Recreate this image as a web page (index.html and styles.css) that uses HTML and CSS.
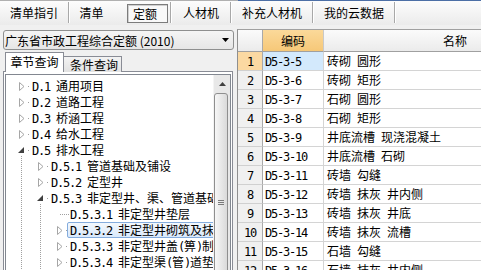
FILE: index.html
```html
<!DOCTYPE html>
<html lang="zh-CN">
<head>
    <meta charset="UTF-8">
    <title>定额</title>
    <link rel="stylesheet" href="styles.css">
</head>
<body>
    <div class="topbar">
        <div class="tab t1">清单指引</div>
        <div class="tab t2">清单</div>
        <div class="tab t3"><span class="cur">定额</span></div>
        <div class="tab t4">人材机</div>
        <div class="tab t5">补充人材机</div>
        <div class="tab t6">我的云数据</div>
    </div>

    <div class="main">
        <div class="left">
            <div class="combo">
                <span>广东省市政工程综合定额 (2010)</span>
                <svg width="7" height="4" viewBox="0 0 7 4"><path d="M0 0H7L3.5 4Z" fill="#000"/></svg>
            </div>
            <div class="subtabs">
                <div class="stab on">章节查询</div>
                <div class="stab">条件查询</div>
            </div>
            <div class="page">
                <div class="treebox">
                    <div class="rows">
                        <div class="node"><span class="cell shut"><svg width="6" height="9"><path d="M0.5 0.5L5 4.5L0.5 8.5Z" fill="#fff" stroke="#a6a6a6"/></svg></span><span class="label"><span class="a">D.1</span>&ensp;通用项目</span></div>
                        <div class="node"><span class="cell shut"><svg width="6" height="9"><path d="M0.5 0.5L5 4.5L0.5 8.5Z" fill="#fff" stroke="#a6a6a6"/></svg></span><span class="label"><span class="a">D.2</span>&ensp;道路工程</span></div>
                        <div class="node"><span class="cell shut"><svg width="6" height="9"><path d="M0.5 0.5L5 4.5L0.5 8.5Z" fill="#fff" stroke="#a6a6a6"/></svg></span><span class="label"><span class="a">D.3</span>&ensp;桥涵工程</span></div>
                        <div class="node"><span class="cell shut"><svg width="6" height="9"><path d="M0.5 0.5L5 4.5L0.5 8.5Z" fill="#fff" stroke="#a6a6a6"/></svg></span><span class="label"><span class="a">D.4</span>&ensp;给水工程</span></div>
                        <div class="node"><span class="cell open"><svg width="6" height="6"><path d="M6 0V6H0Z" fill="#404040"/></svg></span><span class="label"><span class="a">D.5</span>&ensp;排水工程</span></div>
                        <div class="node"><span class="cell guide"></span><span class="cell shut"><svg width="6" height="9"><path d="M0.5 0.5L5 4.5L0.5 8.5Z" fill="#fff" stroke="#a6a6a6"/></svg></span><span class="label"><span class="a">D.5.1</span>&ensp;管道基础及铺设</span></div>
                        <div class="node"><span class="cell guide"></span><span class="cell shut"><svg width="6" height="9"><path d="M0.5 0.5L5 4.5L0.5 8.5Z" fill="#fff" stroke="#a6a6a6"/></svg></span><span class="label"><span class="a">D.5.2</span>&ensp;定型井</span></div>
                        <div class="node"><span class="cell guide"></span><span class="cell open"><svg width="6" height="6"><path d="M6 0V6H0Z" fill="#404040"/></svg></span><span class="label"><span class="a">D.5.3</span>&ensp;非定型井、渠、管道基础及砌筑</span></div>
                        <div class="node"><span class="cell guide"></span><span class="cell guide"></span><span class="cell leaf"></span><span class="label"><span class="a">D.5.3.1</span>&ensp;非定型井垫层</span></div>
                        <div class="node"><span class="cell guide"></span><span class="cell guide"></span><span class="cell shut"><svg width="6" height="9"><path d="M0.5 0.5L5 4.5L0.5 8.5Z" fill="#fff" stroke="#a6a6a6"/></svg></span><span class="label sel"><span class="a">D.5.3.2</span>&ensp;非定型井砌筑及抹灰</span></div>
                        <div class="node"><span class="cell guide"></span><span class="cell guide"></span><span class="cell shut"><svg width="6" height="9"><path d="M0.5 0.5L5 4.5L0.5 8.5Z" fill="#fff" stroke="#a6a6a6"/></svg></span><span class="label"><span class="a">D.5.3.3</span>&ensp;非定型井盖<span class="a">(</span>箅<span class="a">)</span>制作、安装</span></div>
                        <div class="node"><span class="cell guide"></span><span class="cell guide"></span><span class="cell shut"><svg width="6" height="9"><path d="M0.5 0.5L5 4.5L0.5 8.5Z" fill="#fff" stroke="#a6a6a6"/></svg></span><span class="label"><span class="a">D.5.3.4</span>&ensp;非定型渠<span class="a">(</span>管<span class="a">)</span>道垫层</span></div>
                    </div>
                    <div class="sbar">
                        <div class="sbar-up">
                            <svg width="7" height="4" viewBox="0 0 7 4"><path d="M0 4H7L3.5 0Z" fill="#404040"/></svg>
                        </div>
                        <div class="sbar-thumb">
                            <svg width="6" height="5" viewBox="0 0 6 5"><path d="M0 0.5H6M0 2.5H6M0 4.5H6" stroke="#7a7a7a"/></svg>
                        </div>
                    </div>
                </div>
            </div>
        </div>

        <div class="grid">
            <div class="row head">
                <div class="c num"></div>
                <div class="c code hl">编码</div>
                <div class="c name">名称</div>
            </div>
            <div class="row">
                <div class="c num hl"><span class="a">1</span></div>
                <div class="c code cur-cell"><span class="a">D5-3-5</span></div>
                <div class="c name">砖砌&ensp;圆形</div>
            </div>
            <div class="row">
                <div class="c num"><span class="a">2</span></div>
                <div class="c code"><span class="a">D5-3-6</span></div>
                <div class="c name">砖砌&ensp;矩形</div>
            </div>
            <div class="row">
                <div class="c num"><span class="a">3</span></div>
                <div class="c code"><span class="a">D5-3-7</span></div>
                <div class="c name">石砌&ensp;圆形</div>
            </div>
            <div class="row">
                <div class="c num"><span class="a">4</span></div>
                <div class="c code"><span class="a">D5-3-8</span></div>
                <div class="c name">石砌&ensp;矩形</div>
            </div>
            <div class="row">
                <div class="c num"><span class="a">5</span></div>
                <div class="c code"><span class="a">D5-3-9</span></div>
                <div class="c name">井底流槽&ensp;现浇混凝土</div>
            </div>
            <div class="row">
                <div class="c num"><span class="a">6</span></div>
                <div class="c code"><span class="a">D5-3-10</span></div>
                <div class="c name">井底流槽&ensp;石砌</div>
            </div>
            <div class="row">
                <div class="c num"><span class="a">7</span></div>
                <div class="c code"><span class="a">D5-3-11</span></div>
                <div class="c name">砖墙&ensp;勾缝</div>
            </div>
            <div class="row">
                <div class="c num"><span class="a">8</span></div>
                <div class="c code"><span class="a">D5-3-12</span></div>
                <div class="c name">砖墙&ensp;抹灰&ensp;井内侧</div>
            </div>
            <div class="row">
                <div class="c num"><span class="a">9</span></div>
                <div class="c code"><span class="a">D5-3-13</span></div>
                <div class="c name">砖墙&ensp;抹灰&ensp;井底</div>
            </div>
            <div class="row">
                <div class="c num"><span class="a">10</span></div>
                <div class="c code"><span class="a">D5-3-14</span></div>
                <div class="c name">砖墙&ensp;抹灰&ensp;流槽</div>
            </div>
            <div class="row">
                <div class="c num"><span class="a">11</span></div>
                <div class="c code"><span class="a">D5-3-15</span></div>
                <div class="c name">石墙&ensp;勾缝</div>
            </div>
            <div class="row">
                <div class="c num"><span class="a">12</span></div>
                <div class="c code"><span class="a">D5-3-16</span></div>
                <div class="c name">石墙&ensp;抹灰&ensp;井内侧</div>
            </div>
        </div>
    </div>
</body>
</html>
```

FILE: styles.css
```css
body {
    margin: 0;
    width: 481px;
    height: 270px;
    overflow: hidden;
    background: #f0f0f0;
    font-family: "Noto Sans CJK SC", sans-serif;
    font-size: 12px;
    color: #000;
}

/* latin and digits, half width like the bitmap font of the original */
.a {
    font-family: "DejaVu Sans Mono", monospace;
    font-size: 12px;
    line-height: 1;
    letter-spacing: -1.22px;
}

/* top tabs */
.topbar {
    display: flex;
    height: 25px;
    background:
        linear-gradient(#4c6fa6, #4c6fa6) 238px 0 / 100% 1px no-repeat,
        linear-gradient(#b0b0b0, #b0b0b0) 0 0 / 238px 1px no-repeat,
        linear-gradient(#fdfdfd, #ebebeb);
}

.tab {
    flex: none;
    height: 21px;
    margin-top: 2px;
    margin-right: 1px;
    line-height: 21px;
    text-align: center;
    border-right: 1px solid #a8a8a8;
    box-shadow: 1px 0 0 #fff;
}

.t1 { width: 68px; }
.t2 { width: 43px; border-right: none; box-shadow: none; margin-right: 0; }
.t3 { width: 57px; text-align: left; }
.t4 { width: 58px; }
.t5 { width: 80px; }
.t6 { width: 80px; }

.cur {
    display: block;
    box-sizing: border-box;
    width: 41px;
    height: 19px;
    margin: 2px 0 0 14px;
    padding-left: 5px;
    line-height: 17px;
    border: 1px solid #7c7c7c;
    box-shadow: inset 1px 1px 0 #d0d0d0;
    background: #f9f9f9;
}

.main {
    display: flex;
    height: 245px;
}

/* left panel */
.left {
    flex: none;
    width: 234px;
    padding-top: 5px;
}

.combo {
    box-sizing: border-box;
    width: 231px;
    height: 20px;
    margin-left: 3px;
    padding: 0 4px 0 1px;
    display: flex;
    align-items: center;
    justify-content: space-between;
    border: 1px solid #8e8f8f;
    border-radius: 3px;
    background: linear-gradient(#f5f5f5, #e6e6e6);
}

.subtabs {
    display: flex;
    align-items: flex-end;
    height: 19px;
    margin: 3px 0 -1px 5px;
}

.stab {
    box-sizing: border-box;
    width: 58px;
    height: 16px;
    line-height: 16px;
    text-align: center;
    border: 1px solid #898c95;
    border-bottom: none;
    background: linear-gradient(#f3f3f3, #e2e2e2);
}

.stab.on {
    width: 59px;
    height: 20px;
    line-height: 18px;
    background: #fff;
    position: relative;
    z-index: 1;
}

.stab + .stab {
    border-left: none;
    padding-left: 3px;
}

.page {
    width: 230px;
    height: 200px;
    box-sizing: border-box;
    margin-left: 3px;
    padding: 2px 1px 0 1px;
    border: 1px solid #898c95;
    border-bottom: none;
    background: #fff;
}

.treebox {
    display: flex;
    flex-direction: row;
    flex-wrap: nowrap;
    width: 226px;
    height: 197px;
    box-sizing: border-box;
    border: 1px solid #828790;
    border-bottom: none;
    background: #fff;
    overflow: hidden;
}

.rows {
    flex: 0 0 207px;
    width: 207px;
    height: 197px;
    box-sizing: border-box;
    overflow: hidden;
    padding: 3px 0 0 6px;
    white-space: nowrap;
}

.node {
    display: flex;
    height: 16px;
    line-height: 16px;
}

.cell {
    flex: none;
    width: 19px;
    height: 16px;
}

.cell svg {
    display: block;
}

/* dotted tree lines are backgrounds of the cells */
.guide {
    background: repeating-linear-gradient(#a0a0a0 0 1px, transparent 1px 2px) 9px 0 / 1px 16px no-repeat;
}

.shut {
    background: linear-gradient(#a0a0a0, #a0a0a0) 16px 8px / 1px 1px no-repeat;
}

.shut svg {
    margin: 4px 0 0 7px;
}

.open {
    background:
        linear-gradient(#a0a0a0, #a0a0a0) 16px 8px / 1px 1px no-repeat,
        repeating-linear-gradient(#a0a0a0 0 1px, transparent 1px 2px) 9px 14px / 1px 2px no-repeat;
}

.open svg {
    margin: 5px 0 0 6px;
}

.leaf {
    background: repeating-linear-gradient(to right, #a0a0a0 0 1px, transparent 1px 2px) 10px 8px / 9px 1px no-repeat;
}

.label {
    flex: none;
    margin-left: -2px;
    padding: 0 2px;
    border: 1px solid transparent;
    line-height: 14px;
}

.label.sel {
    border-color: #84acdd;
    border-radius: 2px;
    background: linear-gradient(#f3f8fd, #d9e9fb);
}

/* tree scrollbar */
.sbar {
    flex: 0 0 17px;
    width: 17px;
    height: 197px;
    box-sizing: border-box;
    background-color: #e8e8e8;
    border-left: 1px solid #f4f4f4;
}

.sbar-up {
    height: 18px;
    display: flex;
    align-items: center;
    justify-content: center;
}

.sbar-thumb {
    width: 14px;
    height: 218px;
    box-sizing: border-box;
    border: 1px solid #8f8f8f;
    border-radius: 3px;
    background-color: #ececec;
    background-image: linear-gradient(to right, #f7f7f7, #dadada);
    display: flex;
    align-items: center;
    justify-content: center;
}

/* right grid */
.grid {
    flex: 1;
    min-width: 0;
    margin: 4px 0 0 3px;
    border-top: 1px solid #a0a0a0;
    border-left: 1px solid #8f8f8f;
    background: #fff;
    overflow: hidden;
}

.row {
    display: grid;
    grid-template-columns: 25px 61px 263px;
    height: 19px;
}

.c {
    box-sizing: border-box;
    border-right: 1px solid #d4d4d4;
    border-bottom: 1px solid #d4d4d4;
    line-height: 18px;
    white-space: nowrap;
    overflow: hidden;
}

.num {
    text-align: center;
    background: #f0f0f0;
    border-right-color: #a9a9a9;
    border-bottom-color: #d0d0d0;
}

.num.hl {
    background: #fbd9a2;
}

.code {
    padding-left: 2px;
}

.code.cur-cell {
    background: #d3e9fc;
}

.name {
    padding-left: 3px;
}

.row.head {
    height: 22px;
}

.head .c {
    text-align: center;
    line-height: 21px;
    padding: 0;
    border-bottom-color: #a0a0a0;
    background: linear-gradient(#fbfbfb, #ebebeb);
}

.head .code.hl {
    background: linear-gradient(#fbd99a, #f6c878);
    border-right-color: #c9c9c9;
}
```
